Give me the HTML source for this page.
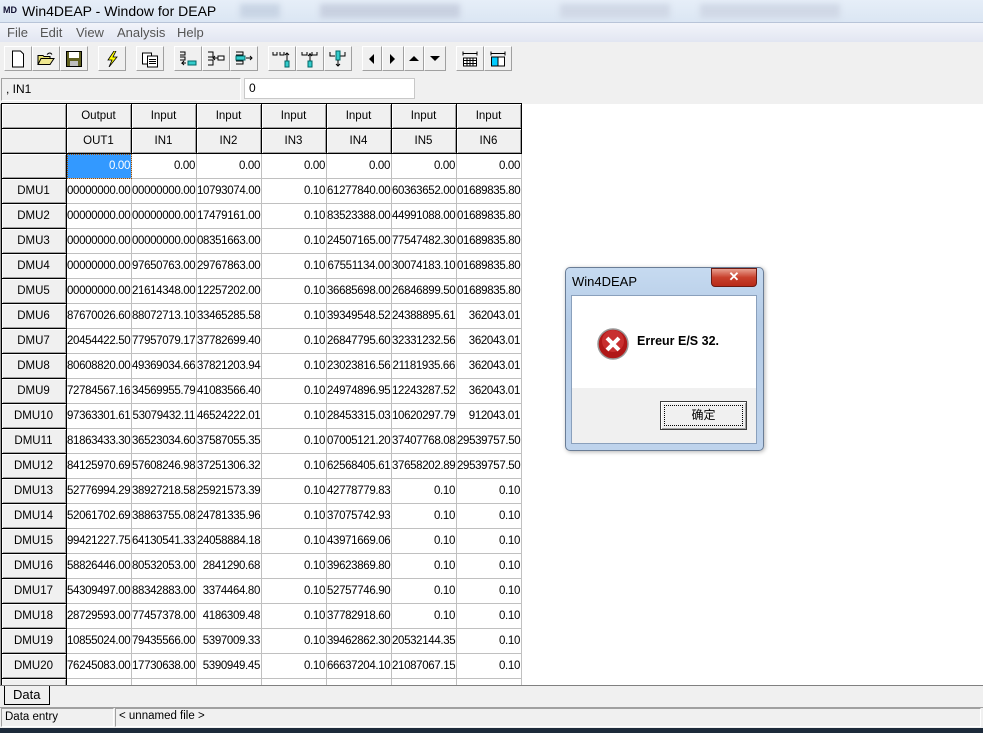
<!DOCTYPE html>
<html><head><meta charset="utf-8"><style>
*{margin:0;padding:0;box-sizing:border-box}
body{width:983px;height:733px;overflow:hidden;background:#fff;font-family:"Liberation Sans","Noto Sans CJK SC",sans-serif;font-size:12px;color:#000;position:relative}
.a{position:absolute}
.title{left:0;top:0;width:983px;height:22px;background:linear-gradient(#e6eef8,#dbe6f3);}
.menu{left:0;top:22px;width:983px;height:20px;background:linear-gradient(#f2f4fa,#e2e6f2);border-top:1px solid #b8c4d8}
.menu span{position:absolute;top:2px;color:#555;font-size:13px}
.tb{left:0;top:42px;width:983px;height:34px;background:#f0f0f0}
.btn{position:absolute;top:4px;height:25px;border:1px solid;border-color:#fff #a0a0a0 #a0a0a0 #fff;background:#f0f0f0}
.btn svg{position:absolute;left:50%;top:50%;transform:translate(-50%,-50%)}
.mid{left:0;top:76px;width:983px;height:28px;background:#f0f0f0}
table{position:absolute;left:1px;top:103px;width:521px;border-collapse:collapse;table-layout:fixed;font-size:11.5px;letter-spacing:-0.35px}
td{height:25px;border:1px solid #c0c0c0;text-align:right;padding:0 1px 0 0;white-space:nowrap;overflow:hidden;background:#fff}
td.h,td.r{background:#f0f0f0;text-align:center;border:1px solid #000;box-shadow:inset 1px 1px 0 #fff,inset -1px -1px 0 #a0a0a0;letter-spacing:0}
td.sel{background:#3399ff;color:#fff;outline:1px dotted #a05000;outline-offset:-1px}
</style></head><body>
<div class="a title"><span class="a" style="left:3px;top:5px;font-size:9px;font-weight:bold;color:#113">MD</span><span class="a" style="left:22px;top:3px;font-size:14px">Win4DEAP - Window for DEAP</span>
<div class="a" style="left:240px;top:4px;width:40px;height:14px;background:#c8d4e4;filter:blur(3px)"></div>
<div class="a" style="left:320px;top:4px;width:140px;height:14px;background:#c8d0e0;filter:blur(3px)"></div>
<div class="a" style="left:560px;top:4px;width:110px;height:14px;background:#d0d8e6;filter:blur(3px)"></div>
<div class="a" style="left:700px;top:4px;width:140px;height:14px;background:#d0d8e6;filter:blur(3px)"></div></div>
<div class="a menu"><span style="left:7px">File</span><span style="left:40px">Edit</span><span style="left:76px">View</span><span style="left:117px">Analysis</span><span style="left:177px">Help</span></div>
<div class="a tb">
<div class="btn" style="left:4px;width:28px"><svg width="14" height="17"><path d="M1.5 .5h8l3 3v13h-11z" fill="#fff" stroke="#000"/></svg></div>
<div class="btn" style="left:32px;width:28px"><svg width="18" height="15"><path d="M1 4h5l1 1h6v8H1z" fill="#e8e070" stroke="#000"/><path d="M1 13l3-6h13l-4 6z" fill="#f0e890" stroke="#000"/><path d="M10 3q3-3 5 0" stroke="#000" fill="none"/></svg></div>
<div class="btn" style="left:60px;width:28px"><svg width="16" height="16"><rect x=".5" y=".5" width="15" height="15" fill="#606020" stroke="#000"/><rect x="3" y="1" width="10" height="6" fill="#fff"/><rect x="4" y="10" width="8" height="5" fill="#c0c0c0"/></svg></div>
<div class="btn" style="left:98px;width:28px"><svg width="12" height="16"><path d="M8 0L2 9h4l-3 7 8-10H7l3-6z" fill="#ff0" stroke="#000" stroke-width=".8"/></svg></div>
<div class="btn" style="left:136px;width:28px"><svg width="16" height="17"><rect x=".5" y="2.5" width="9" height="11" fill="#fff" stroke="#000"/><rect x="5.5" y="5.5" width="10" height="11" fill="#fff" stroke="#000"/><path d="M7 9h7M7 11h7M7 13h7" stroke="#000"/></svg></div>
<div class="btn" style="left:174px;width:28px"><svg width="20" height="16"><path d="M2 1h5v3H2M2 6h5v3H2" fill="none" stroke="#000"/><path d="M8 12h-4l2-2M4 12l2 2" stroke="#000" fill="none"/><rect x="10" y="10" width="8" height="4" fill="#3cc" stroke="#066"/></svg></div>
<div class="btn" style="left:202px;width:28px"><svg width="20" height="16"><path d="M2 1h5v5H2M2 9h5v5H2" fill="none" stroke="#000"/><path d="M8 7h4M9 5l-2 2 2 2" stroke="#000" fill="none"/><rect x="12" y="5" width="6" height="4" fill="#fff" stroke="#000"/></svg></div>
<div class="btn" style="left:230px;width:28px"><svg width="20" height="16"><path d="M2 1h7v3H2M2 10h7v3H2" fill="none" stroke="#000"/><rect x="2" y="5" width="9" height="4" fill="#3cc" stroke="#066"/><path d="M12 7h6M16 5l2 2-2 2" stroke="#000" fill="none"/></svg></div>
<div class="btn" style="left:268px;width:28px"><svg width="20" height="18"><path d="M1 2v3h4V2M8 2v3h4V2" fill="none" stroke="#000"/><path d="M15 3v8M13 5l2-2 2 2" stroke="#000" fill="none"/><rect x="13" y="11" width="4" height="6" fill="#3cc" stroke="#066"/></svg></div>
<div class="btn" style="left:296px;width:28px"><svg width="18" height="18"><path d="M1 2v3h5V2M11 2v3h5V2" fill="none" stroke="#000"/><path d="M9 3v8M7 6l2-2 2 2" stroke="#000" fill="none"/><rect x="7" y="11" width="4" height="6" fill="#3cc" stroke="#066"/></svg></div>
<div class="btn" style="left:324px;width:28px"><svg width="18" height="18"><path d="M1 2v4h5M16 2v4h-5" fill="none" stroke="#000"/><rect x="7" y="1" width="4" height="9" fill="#3cc" stroke="#066"/><path d="M9 10v6M7 14l2 2 2-2" stroke="#000" fill="none"/></svg></div>
<div class="btn" style="left:362px;width:20px"><svg width="6" height="10"><path d="M5 0v10L0 5z"/></svg></div>
<div class="btn" style="left:382px;width:22px"><svg width="6" height="10"><path d="M0 0v10l5-5z"/></svg></div>
<div class="btn" style="left:404px;width:20px"><svg width="10" height="6"><path d="M0 5h10L5 0z"/></svg></div>
<div class="btn" style="left:424px;width:22px"><svg width="10" height="6"><path d="M0 0h10L5 5z"/></svg></div>
<div class="btn" style="left:456px;width:28px"><svg width="16" height="17"><path d="M1 1v4M15 1v4M1 3h14" stroke="#000"/><rect x="1.5" y="7.5" width="13" height="8" fill="#fff" stroke="#000"/><path d="M1 10h14M1 13h14M5 8v8M8 8v8M11 8v8" stroke="#000"/></svg></div>
<div class="btn" style="left:484px;width:28px"><svg width="16" height="17"><path d="M1 1v4M15 1v4M1 3h14" stroke="#000"/><rect x="1.5" y="6.5" width="13" height="9" fill="#fff" stroke="#000"/><rect x="2" y="7" width="6" height="8" fill="#0cf"/><path d="M8 7v9" stroke="#000"/></svg></div>
</div>
<div class="a mid"><div class="a" style="left:1px;top:2px;width:240px;height:23px;border:1px solid;border-color:#a0a0a0 #fff #fff #a0a0a0;padding:3px 4px;font-size:12px">, IN1</div>
<div class="a" style="left:244px;top:2px;width:171px;height:21px;border:1px solid #c8c8c8;background:#fff;padding:2px 4px">0</div></div>
<div class="a" style="left:0;top:104px;width:1px;height:582px;background:#a0a0a0"></div>
<table>
<colgroup><col style="width:65px"><col style="width:65px"><col style="width:65px"><col style="width:65px"><col style="width:65px"><col style="width:65px"><col style="width:65px"><col style="width:65px"></colgroup>
<tr><td class="h"></td><td class="h">Output</td><td class="h">Input</td><td class="h">Input</td><td class="h">Input</td><td class="h">Input</td><td class="h">Input</td><td class="h">Input</td></tr>
<tr><td class="h"></td><td class="h">OUT1</td><td class="h">IN1</td><td class="h">IN2</td><td class="h">IN3</td><td class="h">IN4</td><td class="h">IN5</td><td class="h">IN6</td></tr>
<tr><td class="r"></td><td class="sel">0.00</td><td>0.00</td><td>0.00</td><td>0.00</td><td>0.00</td><td>0.00</td><td>0.00</td></tr>
<tr><td class="r">DMU1</td><td>00000000.00</td><td>00000000.00</td><td>10793074.00</td><td>0.10</td><td>61277840.00</td><td>60363652.00</td><td>01689835.80</td></tr>
<tr><td class="r">DMU2</td><td>00000000.00</td><td>00000000.00</td><td>17479161.00</td><td>0.10</td><td>83523388.00</td><td>44991088.00</td><td>01689835.80</td></tr>
<tr><td class="r">DMU3</td><td>00000000.00</td><td>00000000.00</td><td>08351663.00</td><td>0.10</td><td>24507165.00</td><td>77547482.30</td><td>01689835.80</td></tr>
<tr><td class="r">DMU4</td><td>00000000.00</td><td>97650763.00</td><td>29767863.00</td><td>0.10</td><td>67551134.00</td><td>30074183.10</td><td>01689835.80</td></tr>
<tr><td class="r">DMU5</td><td>00000000.00</td><td>21614348.00</td><td>12257202.00</td><td>0.10</td><td>36685698.00</td><td>26846899.50</td><td>01689835.80</td></tr>
<tr><td class="r">DMU6</td><td>87670026.60</td><td>88072713.10</td><td>33465285.58</td><td>0.10</td><td>39349548.52</td><td>24388895.61</td><td>362043.01</td></tr>
<tr><td class="r">DMU7</td><td>20454422.50</td><td>77957079.17</td><td>37782699.40</td><td>0.10</td><td>26847795.60</td><td>32331232.56</td><td>362043.01</td></tr>
<tr><td class="r">DMU8</td><td>80608820.00</td><td>49369034.66</td><td>37821203.94</td><td>0.10</td><td>23023816.56</td><td>21181935.66</td><td>362043.01</td></tr>
<tr><td class="r">DMU9</td><td>72784567.16</td><td>34569955.79</td><td>41083566.40</td><td>0.10</td><td>24974896.95</td><td>12243287.52</td><td>362043.01</td></tr>
<tr><td class="r">DMU10</td><td>97363301.61</td><td>53079432.11</td><td>46524222.01</td><td>0.10</td><td>28453315.03</td><td>10620297.79</td><td>912043.01</td></tr>
<tr><td class="r">DMU11</td><td>81863433.30</td><td>36523034.60</td><td>37587055.35</td><td>0.10</td><td>07005121.20</td><td>37407768.08</td><td>29539757.50</td></tr>
<tr><td class="r">DMU12</td><td>84125970.69</td><td>57608246.98</td><td>37251306.32</td><td>0.10</td><td>62568405.61</td><td>37658202.89</td><td>29539757.50</td></tr>
<tr><td class="r">DMU13</td><td>52776994.29</td><td>38927218.58</td><td>25921573.39</td><td>0.10</td><td>42778779.83</td><td>0.10</td><td>0.10</td></tr>
<tr><td class="r">DMU14</td><td>52061702.69</td><td>38863755.08</td><td>24781335.96</td><td>0.10</td><td>37075742.93</td><td>0.10</td><td>0.10</td></tr>
<tr><td class="r">DMU15</td><td>99421227.75</td><td>64130541.33</td><td>24058884.18</td><td>0.10</td><td>43971669.06</td><td>0.10</td><td>0.10</td></tr>
<tr><td class="r">DMU16</td><td>58826446.00</td><td>80532053.00</td><td>2841290.68</td><td>0.10</td><td>39623869.80</td><td>0.10</td><td>0.10</td></tr>
<tr><td class="r">DMU17</td><td>54309497.00</td><td>88342883.00</td><td>3374464.80</td><td>0.10</td><td>52757746.90</td><td>0.10</td><td>0.10</td></tr>
<tr><td class="r">DMU18</td><td>28729593.00</td><td>77457378.00</td><td>4186309.48</td><td>0.10</td><td>37782918.60</td><td>0.10</td><td>0.10</td></tr>
<tr><td class="r">DMU19</td><td>10855024.00</td><td>79435566.00</td><td>5397009.33</td><td>0.10</td><td>39462862.30</td><td>20532144.35</td><td>0.10</td></tr>
<tr><td class="r">DMU20</td><td>76245083.00</td><td>17730638.00</td><td>5390949.45</td><td>0.10</td><td>66637204.10</td><td>21087067.15</td><td>0.10</td></tr>
<tr><td class="r"></td><td></td><td></td><td></td><td></td><td></td><td></td><td></td></tr>
</table>
<div class="a" style="left:0;top:685px;width:983px;height:48px;background:#f0f0f0;border-top:1px solid #808080"></div>
<div class="a" style="left:4px;top:686px;width:46px;height:19px;border:1px solid #000;border-top:none;background:#f0f0f0;padding:1px 8px;font-size:13px">Data</div>
<div class="a" style="left:0;top:707px;width:983px;height:21px;border-top:1px solid #a0a0a0"></div>
<div class="a" style="left:1px;top:708px;width:113px;height:19px;border:1px solid;border-color:#a0a0a0 #fff #fff #a0a0a0;padding:2px 3px;font-size:11.5px">Data entry</div>
<div class="a" style="left:115px;top:708px;width:866px;height:19px;border:1px solid;border-color:#a0a0a0 #fff #fff #a0a0a0;padding:1px 3px;font-size:11.5px">&lt; unnamed file &gt;</div>
<div class="a" style="left:0;top:728px;width:983px;height:5px;background:#1d2a3a"></div>
<div class="a" style="left:565px;top:267px;width:199px;height:184px;border:1px solid #6a7d96;border-radius:5px;background:linear-gradient(#c6daf0,#b4cbe6 30%,#bed3ec);box-shadow:1px 1px 4px rgba(0,0,0,.3)"></div>
<div class="a" style="left:572px;top:274px;font-size:13px">Win4DEAP</div>
<div class="a" style="left:711px;top:268px;width:46px;height:19px;border:1px solid #6c1a12;border-radius:0 0 4px 4px;background:linear-gradient(#e8a090,#c8402c 50%,#b82a18);color:#fff;font-weight:bold;text-align:center;font-size:13px;line-height:16px">✕</div>
<div class="a" style="left:571px;top:295px;width:186px;height:149px;border:1px solid #8aa0bc;background:#f0f0f0"></div>
<div class="a" style="left:572px;top:296px;width:184px;height:92px;background:#fff"></div>
<svg class="a" style="left:597px;top:328px" width="32" height="32"><circle cx="16" cy="16" r="15" fill="#b01818" stroke="#999" stroke-width="1.5"/><circle cx="16" cy="13" r="11" fill="#d84040" opacity=".6"/><path d="M10 10l12 12M22 10l-12 12" stroke="#fff" stroke-width="4"/></svg>
<div class="a" style="left:637px;top:334px;font-size:12.5px;font-weight:bold">Erreur E/S 32.</div>
<div class="a" style="left:660px;top:401px;width:87px;height:29px;border:1px solid #3c3c3c;background:#f0f0f0;box-shadow:inset 1px 1px 0 #fff,inset -1px -1px 0 #a0a0a0"><div style="position:absolute;left:3px;top:3px;right:3px;bottom:3px;border:1px dotted #000;text-align:center;line-height:19px;font-size:12px">确定</div></div>
</body></html>
